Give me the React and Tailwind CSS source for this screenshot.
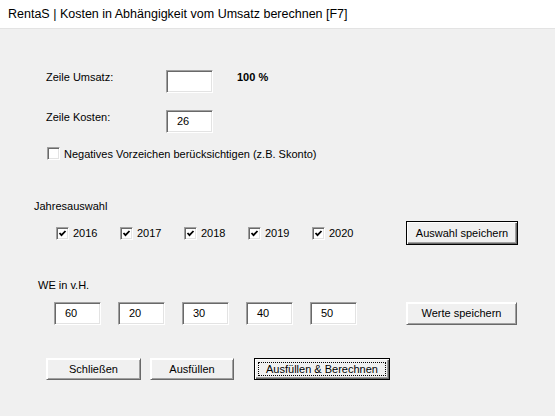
import React from "react";

const sunken =
  "bg-white border border-t-[#a0a0a0] border-l-[#a0a0a0] border-b-[#ffffff] border-r-[#ffffff] shadow-[inset_1px_1px_0_#696969,inset_-1px_-1px_0_#e3e3e3]";

function Field({ value, w = 47 }) {
  return (
    <div
      className={`${sunken} h-[23px] flex items-center pl-[10px] text-[11px] text-black`}
      style={{ width: w }}
    >
      {value}
    </div>
  );
}

function Check({ checked }) {
  return (
    <div className={`${sunken} w-[13px] h-[13px] flex items-center justify-center shrink-0`}>
      {checked && (
        <svg width="9" height="9" viewBox="0 0 9 9">
          <path d="M1.5 4 L3.5 6.2 L7.5 2" fill="none" stroke="#000" strokeWidth="1.8" />
        </svg>
      )}
    </div>
  );
}

function Button({ children, def, focus, w }) {
  const base = def
    ? "border border-black shadow-[inset_1px_1px_0_#ffffff,inset_-1px_-1px_0_#696969,inset_-2px_-2px_0_#a0a0a0]"
    : "border border-t-[#ffffff] border-l-[#ffffff] border-b-[#696969] border-r-[#696969] shadow-[inset_1px_1px_0_#ffffff,inset_-1px_-1px_0_#a0a0a0]";
  return (
    <div
      className={`${base} bg-[#f0f0f0] flex items-center justify-center text-[11px] text-black p-[3px]`}
      style={{ width: w }}
    >
      {focus ? (
        <div className="w-full h-full border border-dotted border-black flex items-center justify-center">
          {children}
        </div>
      ) : (
        children
      )}
    </div>
  );
}

export default function App() {
  const years = ["2016", "2017", "2018", "2019", "2020"];
  const we = ["60", "20", "30", "40", "50"];
  return (
    <div className="w-[555px] h-[416px] overflow-hidden bg-[#f0f0f0] font-['Liberation_Sans',Arial,sans-serif] text-black">
      <div className="h-[29px] bg-white border-b border-[#e3e3e3] flex items-center pl-[8px] text-[12.5px]">
        RentaS | Kosten in Abhängigkeit vom Umsatz berechnen [F7]
      </div>

      <div className="mt-[41px] pl-[46px] flex items-start h-[23px]">
        <div className="w-[120px] text-[11px] leading-[14px]">Zeile Umsatz:</div>
        <Field value="" />
        <div className="ml-[24px] text-[11px] leading-[14px] font-bold">100 %</div>
      </div>

      <div className="mt-[17px] pl-[46px] flex items-start h-[23px]">
        <div className="w-[120px] text-[11px] leading-[14px]">Zeile Kosten:</div>
        <Field value="26" />
      </div>

      <div className="mt-[14px] pl-[47px] flex items-center h-[13px] gap-[4px]">
        <Check />
        <div className="text-[11px] leading-[14px]">Negatives Vorzeichen berücksichtigen (z.B. Skonto)</div>
      </div>

      <div className="mt-[39px] pl-[34px] text-[11px] leading-[14px]">Jahresauswahl</div>

      <div className="mt-[8px] pl-[56px] flex items-center h-[24px]">
        {years.map((y) => (
          <div key={y} className="w-[64px] flex items-center gap-[4px]">
            <Check checked />
            <span className="text-[11px] leading-[14px]">{y}</span>
          </div>
        ))}
        <div className="ml-[30px] h-[24px] flex">
          <Button def w={112}>Auswahl speichern</Button>
        </div>
      </div>

      <div className="mt-[33px] pl-[38px] text-[11px] leading-[14px]">WE in v.H.</div>

      <div className="mt-[10px] pl-[54px] flex items-center h-[23px]">
        <div className="flex gap-[17px]">
          {we.map((v) => (
            <Field key={v} value={v} />
          ))}
        </div>
        <div className="ml-[49px] h-[23px] flex">
          <Button w={111}>Werte speichern</Button>
        </div>
      </div>

      <div className="mt-[33px] pl-[46px] flex h-[22px]">
        <Button w={95}>Schließen</Button>
        <div className="ml-[9px] flex">
          <Button w={84}>Ausfüllen</Button>
        </div>
        <div className="ml-[20px] flex">
          <Button def focus w={136}>Ausfüllen &amp; Berechnen</Button>
        </div>
      </div>
    </div>
  );
}
